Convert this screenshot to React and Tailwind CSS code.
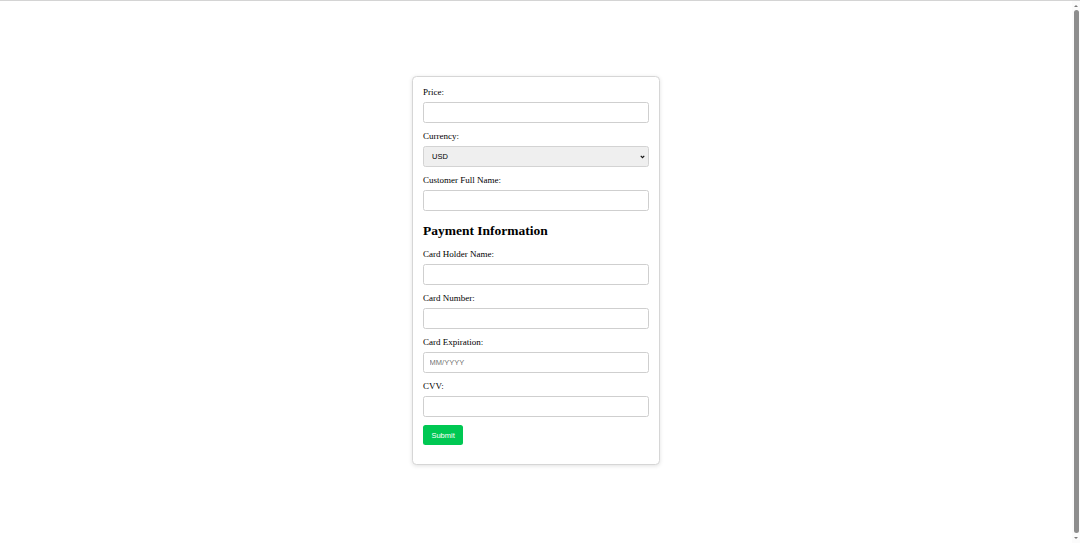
const serif = { fontFamily: '"Liberation Serif", "Times New Roman", serif' };

const Field = ({ label, children }) => (
  <div className="flex flex-col mb-[8.1px]">
    <label className="block text-[9px] leading-[10px] mb-[5px] text-black">{label}</label>
    {children}
  </div>
);

const inputCls =
  "block w-full h-[21px] border border-[#cfcfcf] rounded-[2.5px] px-[5.6px] bg-white text-[7.5px] text-black font-['Liberation_Sans',Arial,sans-serif] outline-none placeholder:text-[#757575]";

const Scrollbar = () => (
  <div className="w-[8px] h-[542px] flex flex-col items-center bg-[#fbfbfb]">
    <div className="h-[9px] flex items-center justify-center">
      <span className="w-0 h-0 border-l-[2px] border-r-[2px] border-b-[2.5px] border-l-transparent border-r-transparent border-b-[#7a7a7a]" />
    </div>
    <div className="w-[5px] flex-1 rounded-full bg-[#8d8d8d]" />
    <div className="h-[10px] flex items-center justify-center">
      <span className="w-0 h-0 border-l-[2px] border-r-[2px] border-t-[2.5px] border-l-transparent border-r-transparent border-t-[#7a7a7a]" />
    </div>
  </div>
);

export default function App() {
  return (
    <div className="w-[1080px] h-[543px] overflow-hidden border-t border-[#d4d4d4] bg-white flex">
      <div className="flex-1 pt-[75px]" style={serif}>
        <div className="mx-auto w-[248px] bg-white border border-[#d6d6d6] rounded-[4.5px] shadow-[0_1px_4px_rgba(0,0,0,0.12)] p-[10px]">
          <form className="flex flex-col" onSubmit={(e) => e.preventDefault()}>
            <Field label="Price:">
              <input type="text" className={inputCls} />
            </Field>
            <Field label="Currency:">
              <div className="relative">
                <select className="block w-full h-[21px] appearance-none border border-[#d3d3d3] rounded-[2.5px] pl-[8px] bg-[#efefef] text-[7.5px] text-black font-['Liberation_Sans',Arial,sans-serif] outline-none">
                  <option>USD</option>
                  <option>EUR</option>
                  <option>GBP</option>
                </select>
                <svg
                  className="absolute right-[4px] top-[8.5px] pointer-events-none"
                  width="5"
                  height="4"
                  viewBox="0 0 10 8"
                >
                  <path d="M1.5 1.8 L5 5.3 L8.5 1.8" fill="none" stroke="#111" strokeWidth="2.4" />
                </svg>
              </div>
            </Field>
            <Field label="Customer Full Name:">
              <input type="text" className={inputCls} />
            </Field>
            <h2 className="text-[13.5px] leading-[15px] font-bold text-black mt-[3.6px] mb-[11.2px]">
              Payment Information
            </h2>
            <Field label="Card Holder Name:">
              <input type="text" className={inputCls} />
            </Field>
            <Field label="Card Number:">
              <input type="text" className={inputCls} />
            </Field>
            <Field label="Card Expiration:">
              <input type="text" placeholder="MM/YYYY" className={inputCls} />
            </Field>
            <Field label="CVV:">
              <input type="text" className={inputCls} />
            </Field>
            <div className="mb-[9px]">
              <button
                type="submit"
                className="flex items-center justify-center h-[19.5px] px-[8.4px] bg-[#00c853] text-white text-[7.5px] rounded-[2.5px] font-['Liberation_Sans',Arial,sans-serif]"
              >
                Submit
              </button>
            </div>
          </form>
        </div>
      </div>
      <Scrollbar />
    </div>
  );
}
